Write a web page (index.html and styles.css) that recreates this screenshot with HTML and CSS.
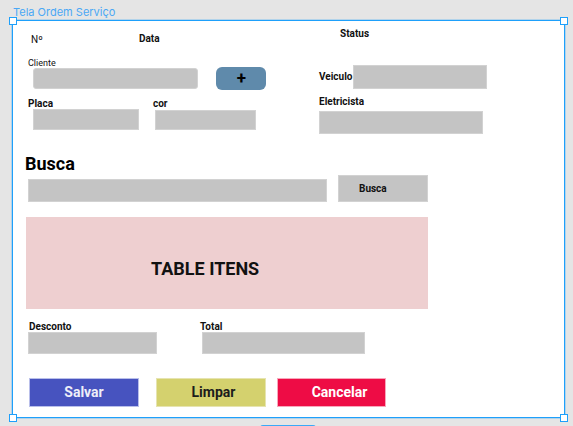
FILE: index.html
```html
<!DOCTYPE html>
<html lang="pt">
<head>
<meta charset="utf-8">
<title>Tela Ordem Serviço</title>
<link rel="stylesheet" href="styles.css">
</head>
<body>
<div class="frame-title">Tela Ordem Serviço</div>
<div class="frame">
  <span class="handle h-tl"></span>
  <span class="handle h-tr"></span>
  <span class="handle h-bl"></span>
  <span class="handle h-br"></span>

  <div class="row row-1">
    <div class="lbl-no">Nº</div>
    <div class="lbl lbl-data">Data</div>
    <div class="lbl lbl-status">Status</div>
  </div>

  <div class="row row-2">
    <div class="col col-cliente">
      <div class="lbl-small">Cliente</div>
      <div class="input in-cliente"></div>
    </div>
    <div class="btn-plus">+</div>
    <div class="col-inline col-veiculo">
      <div class="lbl lbl-veiculo">Veiculo</div>
      <div class="input in-veiculo"></div>
    </div>
  </div>

  <div class="row row-3">
    <div class="col col-placa">
      <div class="lbl lbl-11">Placa</div>
      <div class="input in-placa"></div>
    </div>
    <div class="col col-cor">
      <div class="lbl lbl-11">cor</div>
      <div class="input in-cor"></div>
    </div>
    <div class="col col-eletricista">
      <div class="lbl">Eletricista</div>
      <div class="input in-eletricista"></div>
    </div>
  </div>

  <h2 class="heading">Busca</h2>

  <div class="row row-search">
    <div class="input in-search"></div>
    <div class="btn-search">Busca</div>
  </div>

  <div class="table-items">TABLE ITENS</div>

  <div class="row row-totals">
    <div class="col col-desconto">
      <div class="lbl lbl-11 lbl-desconto">Desconto</div>
      <div class="input in-desconto"></div>
    </div>
    <div class="col col-total">
      <div class="lbl lbl-11">Total</div>
      <div class="input in-total"></div>
    </div>
  </div>

  <div class="row row-actions">
    <div class="btn btn-salvar">Salvar</div>
    <div class="btn btn-limpar">Limpar</div>
    <div class="btn btn-cancelar">Cancelar</div>
  </div>
</div>
<div class="next-frame"></div>
</body>
</html>
```

FILE: styles.css
```css
* { box-sizing: border-box; }

html, body {
  margin: 0;
  padding: 0;
  height: 426px;
  overflow: hidden;
}

body {
  background: #e5e5e5;
  font-family: Roboto, "Liberation Sans", Arial, sans-serif;
  color: #111;
}

.frame-title {
  height: 20px;
  padding: 6px 0 0 13px;
  font-family: Inter, "Noto Sans", sans-serif;
  font-size: 11px;
  line-height: 13px;
  color: #4aa8f5;
  white-space: nowrap;
}

.frame {
  position: relative;
  margin-left: 12px;
  width: 553px;
  height: 398px;
  background: #fff;
  border: 1px solid #1ea0fb;
  box-shadow: 0 0 0 0.5px rgba(30, 160, 251, 0.5);
}

.handle {
  position: absolute;
  width: 8px;
  height: 8px;
  background: #fff;
  border: 1px solid #1ea0fb;
}
.h-tl { left: -4px; top: -4px; }
.h-tr { right: -4px; top: -4px; }
.h-bl { left: -4px; bottom: -5px; }
.h-br { right: -4px; bottom: -5px; }

.row {
  display: flex;
  align-items: flex-start;
}

.col {
  display: flex;
  flex-direction: column;
  align-items: flex-start;
}

.col-inline {
  display: flex;
  align-items: center;
}

.lbl {
  font-size: 10px;
  font-weight: 700;
  line-height: 12px;
  white-space: nowrap;
}
.lbl-11 { line-height: 11px; }

.lbl-small {
  font-size: 9px;
  line-height: 9px;
  white-space: nowrap;
}

.input {
  background: #c4c4c4;
  border: 1px solid #d2d2d2;
}

/* Row 1 */
.row-1 {
  height: 30px;
  margin-top: 7px;
  padding-left: 18px;
}
.lbl-no {
  width: 108px;
  margin-top: 6px;
  font-size: 10px;
  line-height: 12px;
}
.lbl-data {
  width: 201px;
  margin-top: 5px;
}

/* Row 2 */
.row-2 { height: 38px; }
.col-cliente {
  margin-left: 15px;
  margin-top: 1px;
}
.in-cliente {
  margin-left: 5px;
  width: 165px;
  height: 21px;
  border-radius: 3px;
}
.btn-plus {
  margin-left: 18px;
  margin-top: 9px;
  width: 50px;
  height: 23px;
  border-radius: 6px;
  background: #5f8aab;
  color: #000;
  font-size: 17px;
  font-weight: 700;
  line-height: 23px;
  text-align: center;
  padding-left: 1px;
}
.col-veiculo {
  margin-left: 53px;
  margin-top: 7px;
}
.lbl-veiculo { width: 34px; }
.in-veiculo {
  width: 134px;
  height: 24px;
}

/* Row 3 */
.row-3 { height: 57px; }
.col-placa {
  margin-left: 15px;
  margin-top: 2px;
}
.in-placa {
  margin-left: 5px;
  width: 106px;
  height: 21px;
}
.col-cor {
  margin-left: 14px;
  margin-top: 2px;
}
.in-cor {
  margin-left: 2px;
  margin-top: 1px;
  width: 101px;
  height: 20px;
}
.col-eletricista {
  margin-left: 63px;
}
.in-eletricista {
  margin-top: 3px;
  width: 164px;
  height: 23px;
}

/* Busca */
.heading {
  margin: 0 0 0 12px;
  height: 22px;
  font-size: 18px;
  font-weight: 700;
  line-height: 22px;
  color: #000;
}

.row-search { height: 27px; }
.in-search {
  margin-left: 15px;
  margin-top: 4px;
  width: 299px;
  height: 23px;
}
.btn-search {
  margin-left: 11px;
  width: 90px;
  height: 27px;
  padding-left: 20px;
  background: #c4c4c4;
  border: 1px solid #d2d2d2;
  font-size: 10px;
  font-weight: 700;
  line-height: 25px;
  color: #111;
}

/* Table */
.table-items {
  margin: 15px 0 0 13px;
  width: 402px;
  height: 92px;
  padding: 41px 0 0 125px;
  background: #eecfd0;
  font-size: 18px;
  font-weight: 700;
  line-height: 22px;
  color: #111;
  white-space: nowrap;
}

/* Totals */
.row-totals {
  margin-top: 12px;
}
.col-desconto { margin-left: 15px; }
.lbl-desconto { margin-left: 1px; }
.in-desconto {
  width: 129px;
  height: 22px;
}
.col-total { margin-left: 43px; }
.in-total {
  margin-left: 2px;
  width: 163px;
  height: 22px;
}

/* Actions */
.row-actions {
  margin-top: 24px;
}
.btn {
  height: 29px;
  width: 110px;
  font-size: 14px;
  font-weight: 700;
  line-height: 27px;
  text-align: center;
  border: 1px solid transparent;
}
.btn-salvar {
  margin-left: 16px;
  background: #4753bf;
  border-color: #b9bfea;
  color: #eeeef8;
}
.btn-limpar {
  margin-left: 17px;
  background: #d4d16e;
  border-color: #e6e4b0;
  color: #1c1c1c;
  padding-left: 5px;
}
.btn-cancelar {
  margin-left: 11px;
  width: 109px;
  background: #ee0c45;
  border-color: #f7a7bb;
  color: #fff;
  padding-left: 16px;
}

.next-frame {
  margin: 7px 0 0 260px;
  width: 56px;
  height: 4px;
  border-top: 2px solid #3aa9f8;
  border-radius: 3px 3px 0 0;
}
```
